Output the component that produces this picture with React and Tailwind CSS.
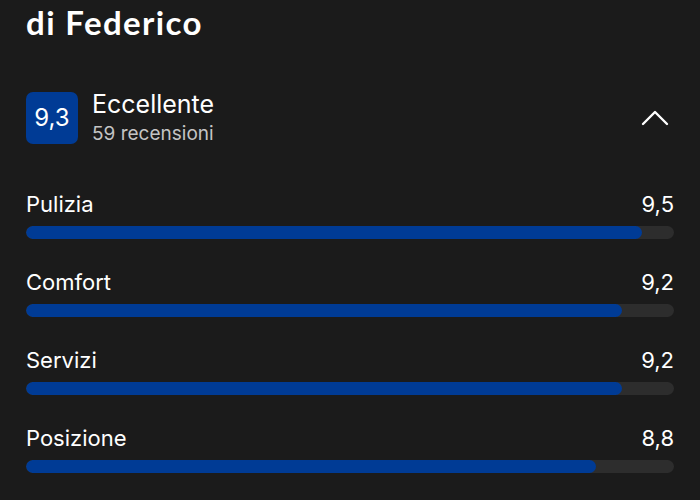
const ratings = [
  { label: 'Pulizia', score: 9.5 },
  { label: 'Comfort', score: 9.2 },
  { label: 'Servizi', score: 9.2 },
  { label: 'Posizione', score: 8.8 },
];

const fmt = (n) => n.toFixed(1).replace('.', ',');

export default function App() {
  return (
    <div className="w-[700px] h-[500px] overflow-hidden bg-[#1b1b1b] text-white px-[26px] font-['Inter',sans-serif]">
      <h1 className="mt-[2px] text-[33px] leading-[40px] font-bold tracking-[1.4px] font-['Lato',sans-serif]">
        di Federico
      </h1>

      {/* Overall score header */}
      <div className="mt-[50px] flex items-start">
        <div className="w-[52px] h-[52px] rounded-[7px] bg-[#003b95] flex items-center justify-center text-[24px]">
          9,3
        </div>
        <div className="ml-[14px] flex-1">
          <div className="-mt-[2px] text-[25px] leading-[28px]">Eccellente</div>
          <div className="mt-[5px] text-[19px] leading-[22px] text-[#c4c4c4]">59 recensioni</div>
        </div>
        <svg className="mt-[18px] mr-[5px]" width="28" height="16" viewBox="0 0 28 16" fill="none">
          <polyline points="2,14 14,2 26,14" stroke="white" strokeWidth="2.4" strokeLinecap="round" strokeLinejoin="round" />
        </svg>
      </div>

      {/* Category ratings */}
      <div className="mt-[47px] flex flex-col gap-[31px]">
        {ratings.map((r) => (
          <div key={r.label}>
            <div className="flex justify-between text-[22px] leading-[24px]">
              <span>{r.label}</span>
              <span>{fmt(r.score)}</span>
            </div>
            <div className="mt-[10px] h-[13px] rounded-full bg-[#2d2d2d] overflow-hidden">
              <div className="h-full rounded-full bg-[#003b95]" style={{ width: `${r.score * 10}%` }} />
            </div>
          </div>
        ))}
      </div>
    </div>
  );
}
